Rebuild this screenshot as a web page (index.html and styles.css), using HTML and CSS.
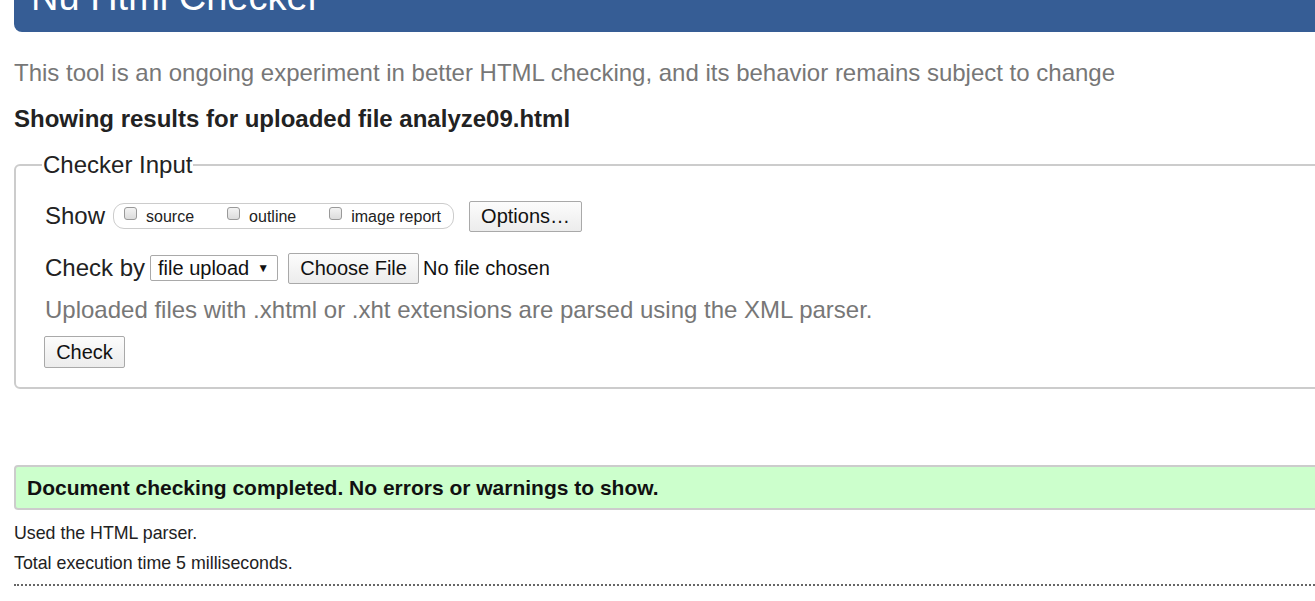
FILE: index.html
```html
<!DOCTYPE html>
<html lang="en">
<head>
<meta charset="utf-8">
<title>Nu Html Checker</title>
<link rel="stylesheet" href="styles.css">
</head>
<body>
<div class="page">
  <h1 class="title">Nu Html Checker</h1>
  <p class="intro">This tool is an ongoing experiment in better HTML checking, and its behavior remains subject to change</p>
  <p class="showing">Showing results for uploaded file analyze09.html</p>
  <fieldset class="checker">
    <legend class="legend">Checker Input</legend>
    <div class="row show-row">
      <span class="row-label">Show</span>
      <span class="pill">
        <label class="opt"><span class="cb"></span>source</label>
        <label class="opt"><span class="cb"></span>outline</label>
        <label class="opt"><span class="cb"></span>image report</label>
      </span>
      <span class="btn btn-options">Options…</span>
    </div>
    <div class="row by-row">
      <span class="row-label">Check by</span>
      <span class="select">file upload <span class="arrow">▼</span></span>
      <span class="btn btn-file">Choose File</span>
      <span class="nofile">No file chosen</span>
    </div>
    <p class="hint">Uploaded files with .xhtml or .xht extensions are parsed using the XML parser.</p>
    <span class="btn btn-check">Check</span>
  </fieldset>
  <div class="success">Document checking completed. No errors or warnings to show.</div>
  <p class="meta meta-first">Used the HTML parser.</p>
  <p class="meta">Total execution time 5 milliseconds.</p>
  <div class="dotted"></div>
</div>
</body>
</html>
```
FILE: styles.css
```css
html, body {
  margin: 0;
  padding: 0;
  overflow: hidden;
  background: #fff;
}
body {
  font-family: "Liberation Sans", Arial, sans-serif;
  color: #222;
}
.page {
  width: 1400px;
  padding-left: 14px;
}
.title {
  margin: -25px 0 0 0;
  background: #365d95;
  color: #fff;
  font-weight: normal;
  font-size: 38px;
  line-height: 44px;
  padding: 0 18px 13px 17px;
  border-bottom-left-radius: 8px;
}
.intro {
  margin: 27px 0 0 0;
  color: #777;
  font-size: 24px;
  line-height: 28px;
}
.showing {
  margin: 18px 0 0 0;
  font-weight: bold;
  font-size: 24px;
  line-height: 28px;
  color: #222;
}
.checker {
  margin: 18px 0 0 0;
  border: 2px solid #ccc;
  border-radius: 6px;
  padding: 7px 30px 19px 29px;
}
.legend {
  font-size: 24px;
  line-height: 28px;
  padding: 0 1px;
  margin-left: -3px;
  color: #222;
}
.row {
  display: flex;
  align-items: center;
}
.row-label {
  font-size: 24px;
  color: #222;
}
.show-row {
  margin-top: 14px;
  height: 32px;
}
.pill {
  display: inline-flex;
  align-items: center;
  margin-left: 8px;
  height: 24px;
  border: 1px solid #ccc;
  border-radius: 11px;
  padding: 0 12px 0 10px;
  box-sizing: content-box;
}
.opt {
  display: inline-flex;
  align-items: center;
  font-size: 16px;
  color: #222;
  margin-right: 33px;
  position: relative;
  top: 1px;
}
.opt:last-child {
  margin-right: 0;
}
.cb {
  width: 13px;
  height: 13px;
  border: 1px solid #999;
  border-radius: 3px;
  background: linear-gradient(#f3f3f3, #dcdcdc);
  margin-right: 9px;
  position: relative;
  top: -4px;
  box-sizing: border-box;
}
.btn {
  display: inline-flex;
  align-items: center;
  justify-content: center;
  border: 1px solid #a9a9a9;
  border-radius: 2px;
  background: linear-gradient(#fcfcfc, #ececec);
  font-size: 20px;
  color: #111;
  box-sizing: border-box;
}
.btn-options {
  margin-left: 15px;
  width: 113px;
  height: 31px;
}
.by-row {
  margin-top: 20px;
  height: 32px;
}
.select {
  margin-left: 5px;
  width: 128px;
  height: 26px;
  border: 1px solid #a9a9a9;
  border-radius: 2px;
  font-size: 20px;
  box-sizing: border-box;
  display: inline-flex;
  align-items: center;
  padding-left: 7px;
  color: #111;
}
.arrow {
  font-size: 12px;
  margin-left: 8px;
}
.btn-file {
  margin-left: 10px;
  width: 131px;
  height: 31px;
}
.nofile {
  margin-left: 4px;
  font-size: 20px;
  color: #111;
}
.hint {
  margin: 12px 0 0 0;
  font-size: 24px;
  line-height: 28px;
  color: #777;
}
.btn-check {
  margin-top: 12px;
  margin-left: -1px;
  width: 81px;
  height: 32px;
}
.success {
  margin-top: 76px;
  background: #ccffcc;
  border: 2px solid #ccc;
  border-radius: 4px;
  padding: 0 11px;
  height: 45px;
  display: flex;
  align-items: center;
  font-weight: bold;
  font-size: 21px;
  color: #111;
  box-sizing: border-box;
}
.meta {
  margin: 0;
  font-size: 17.8px;
  line-height: 30px;
  color: #222;
}
.meta-first {
  margin-top: 8px;
}
.dotted {
  margin-top: 6px;
  border-top: 2px dotted #666;
}
```
